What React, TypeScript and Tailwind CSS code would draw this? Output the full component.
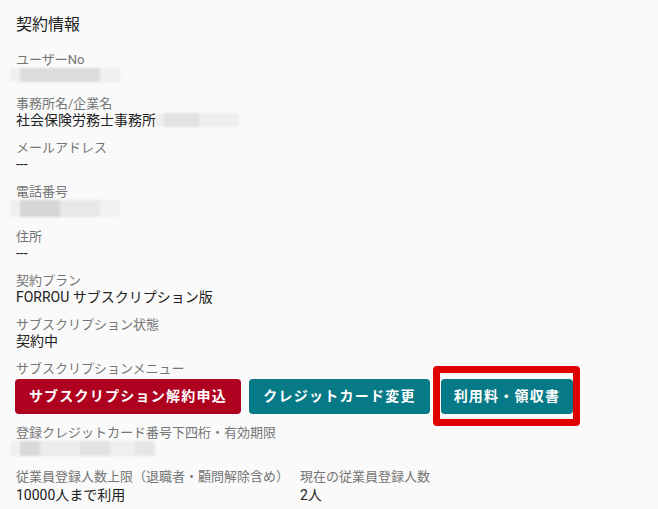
import React from "react";

type Seg = { w: number; c: string };

function Blur({ segs, h = 14, className = "" }: { segs: Seg[]; h?: number; className?: string }) {
  return (
    <div className={`flex blur-[1px] ${className}`} style={{ height: h }}>
      {segs.map((s, i) => (
        <div key={i} style={{ width: s.w, background: s.c }} />
      ))}
    </div>
  );
}

function Field({ label, children }: { label: string; children?: React.ReactNode }) {
  return (
    <div className="mb-3">
      <p className="text-[13px] leading-4 text-[#757575]">{label}</p>
      <div className="text-[14px] leading-4 text-[#212121] min-h-4">{children}</div>
    </div>
  );
}

export default function App() {
  return (
    <div
      className="w-[658px] h-[509px] bg-[#fafafa] pl-4 pt-[13px] overflow-hidden"
      style={{ fontFamily: 'Roboto, "Noto Sans CJK JP", sans-serif' }}
    >
      <h2 className="text-base leading-6 text-[#212121] mb-[15px]">契約情報</h2>

      <Field label="ユーザーNo">
        <Blur
          className="-ml-[6px]"
          segs={[
            { w: 10, c: "#f0f0f0" },
            { w: 80, c: "#dcdcdc" },
            { w: 20, c: "#f0f0f0" },
          ]}
        />
      </Field>

      <Field label="事務所名/企業名">
        <div className="flex items-center">
          <span>社会保険労務士事務所</span>
          <Blur
            segs={[
              { w: 8, c: "#efefef" },
              { w: 35, c: "#e2e2e2" },
              { w: 40, c: "#efefef" },
            ]}
          />
        </div>
      </Field>

      <Field label="メールアドレス">---</Field>

      <Field label="電話番号">
        <Blur
          h={17}
          className="-ml-[6px]"
          segs={[
            { w: 10, c: "#f0f0f0" },
            { w: 40, c: "#d6d6d6" },
            { w: 40, c: "#e8e8e8" },
            { w: 20, c: "#f2f2f2" },
          ]}
        />
      </Field>

      <Field label="住所">---</Field>

      <Field label="契約プラン">FORROU サブスクリプション版</Field>

      <Field label="サブスクリプション状態">契約中</Field>

      <div>
        <p className="text-[13px] leading-4 text-[#757575]">サブスクリプションメニュー</p>
        <div className="flex items-center mt-[2px] -ml-px">
          <button className="w-[226px] h-[35px] rounded bg-[#b0001f] text-white text-[14px] font-bold tracking-[1.25px]">
            サブスクリプション解約申込
          </button>
          <button className="ml-2 w-[181px] h-[35px] rounded bg-[#077a88] text-white text-[14px] font-bold tracking-[1.25px]">
            クレジットカード変更
          </button>
          <div className="relative ml-[11px]">
            <button className="w-[132px] h-[35px] rounded bg-[#077a88] text-white text-[14px] font-bold tracking-[1.25px]">
              利用料・領収書
            </button>
            <div className="absolute -left-2 -top-[13px] -right-[7px] -bottom-3 rounded border-[7px] border-[#e00000]" />
          </div>
        </div>
      </div>

      <div className="mt-[11px]">
        <Field label="登録クレジットカード番号下四桁・有効期限">
          <Blur
            h={15}
            className="-ml-[6px]"
            segs={[
              { w: 10, c: "#f0f0f0" },
              { w: 20, c: "#d9d9d9" },
              { w: 40, c: "#ececec" },
              { w: 30, c: "#e2e2e2" },
              { w: 25, c: "#eeeeee" },
              { w: 20, c: "#e6e6e6" },
            ]}
          />
        </Field>
      </div>

      <div className="flex mt-[12px]">
        <div className="w-[284px]">
          <p className="text-[13px] leading-4 text-[#757575]">従業員登録人数上限（退職者・顧問解除含め）</p>
          <p className="text-[14px] leading-4 text-[#212121] mt-[2px]">10000人まで利用</p>
        </div>
        <div>
          <p className="text-[13px] leading-4 text-[#757575]">現在の従業員登録人数</p>
          <p className="text-[14px] leading-4 text-[#212121] mt-[2px]">2人</p>
        </div>
      </div>
    </div>
  );
}
